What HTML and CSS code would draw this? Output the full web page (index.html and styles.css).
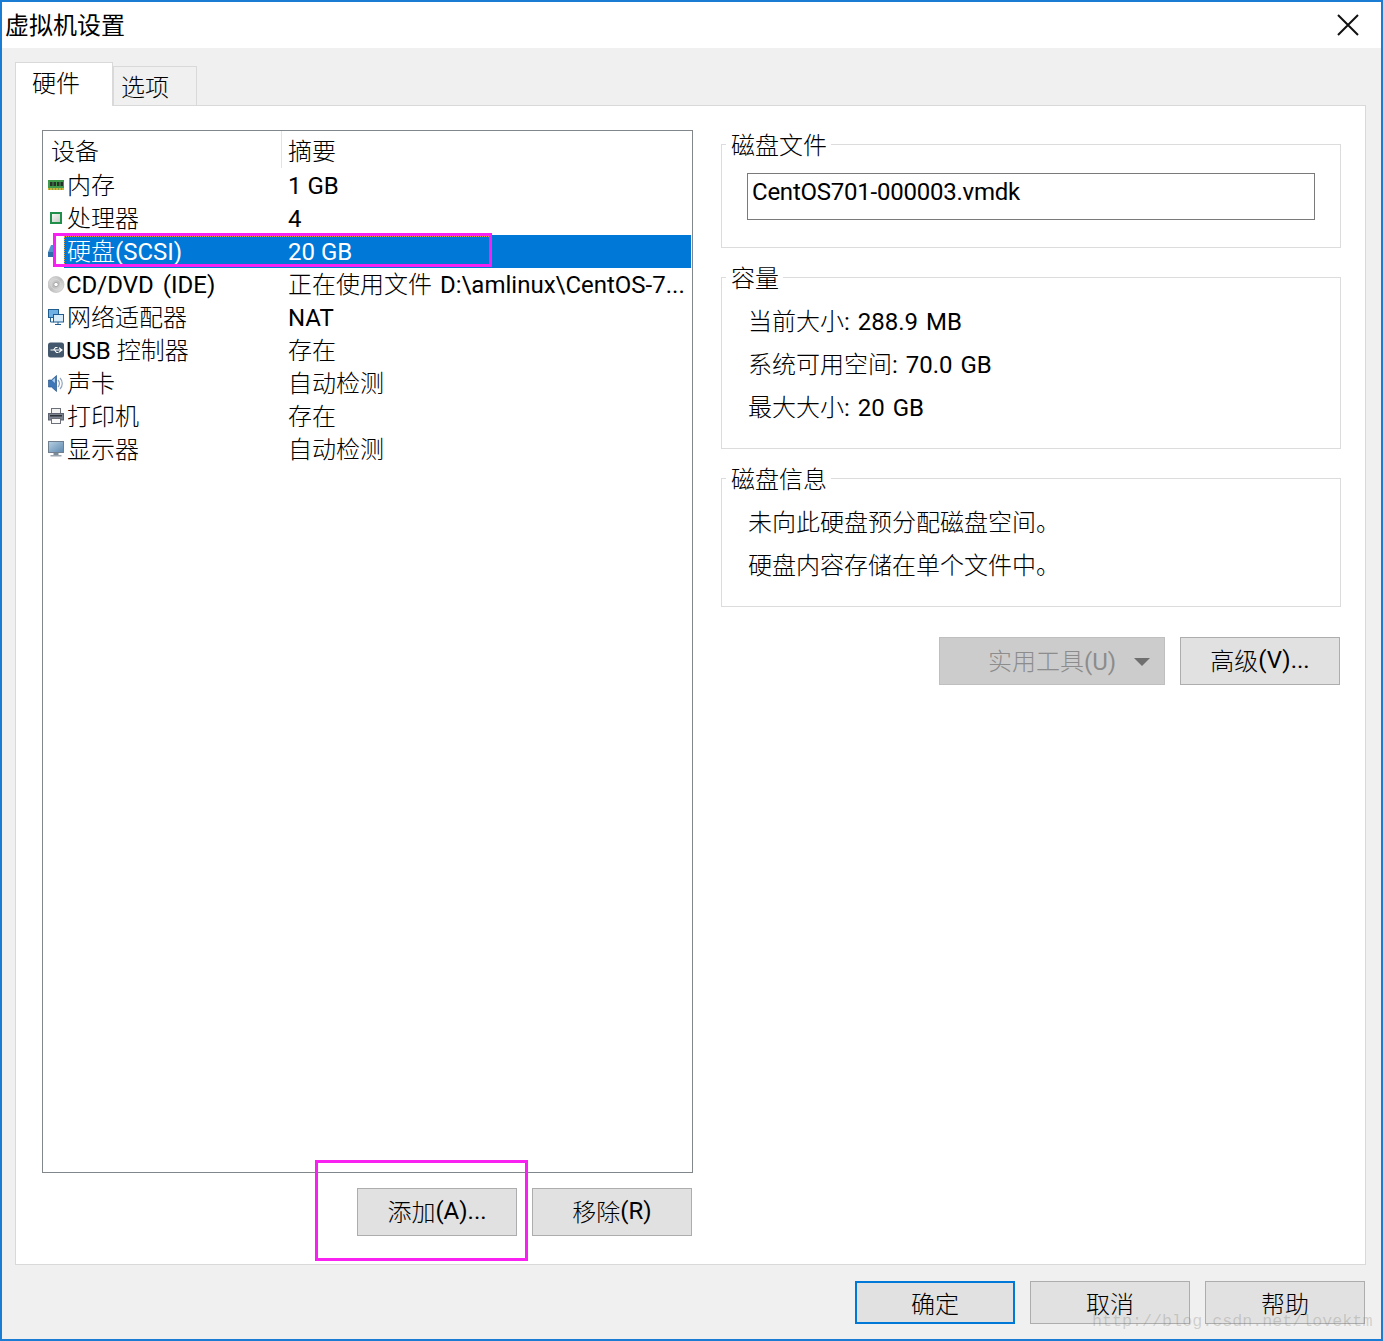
FILE: index.html
```html
<!DOCTYPE html>
<html lang="zh-CN">
<head>
<meta charset="utf-8">
<title>虚拟机设置</title>
<link rel="stylesheet" href="styles.css">
</head>
<body>
<div class="window">
  <header class="titlebar">
    <span class="title">虚拟机设置</span>
    <svg class="close" width="22" height="22" viewBox="0 0 22 22"><path d="M1 1 L21 21 M21 1 L1 21" stroke="#111" stroke-width="2" fill="none"/></svg>
  </header>
  <div class="tabs">
    <div class="tab tab-active">硬件</div>
    <div class="tab">选项</div>
  </div>
  <main class="panel">
    <section class="left">
      <div class="list">
        <div class="row head"><span class="c1">设备</span><span class="c2">摘要</span></div>
        <div class="row"><span class="ico"><svg width="17" height="17" viewBox="0 0 17 17"><rect x="0" y="3" width="16" height="8" fill="#3f9a4c"/><rect x="0" y="11" width="16" height="2" fill="#c9b53c"/><path d="M2 5h2.500v4H2zM5.500 5H8v4H5.500zM9 5h2.500v4H9zM12.500 5H15v4h-2.500z" fill="#2b2f2b"/><path d="M1 12h1M4 12h1M7 12h1M10 12h1M13 12h1" stroke="#4a8a3f"/></svg></span><span class="c1 t">内存</span><span class="c2 lat">1 GB</span></div>
        <div class="row"><span class="ico"><svg width="17" height="17" viewBox="0 0 17 17"><defs><linearGradient id="cpu" x1="0" y1="0" x2="1" y2="1"><stop offset="0" stop-color="#f6f6f2"/><stop offset="1" stop-color="#c9ccc6"/></linearGradient></defs><rect x="2" y="2" width="12" height="12" fill="#1f8f4a"/><rect x="4" y="4" width="8" height="8" fill="url(#cpu)"/></svg></span><span class="c1 t">处理器</span><span class="c2 lat">4</span></div>
        <div class="row sel"><span class="ico"><svg width="17" height="17" viewBox="0 0 17 17"><path d="M3 2h10l3 7v5H0V9z" fill="#4f96d0"/><rect x="0" y="9" width="16" height="5" fill="#2e6ea8"/><rect x="13" y="11" width="2" height="1" fill="#cde"/></svg></span><span class="c1 t">硬盘<span class="lat">(SCSI)</span></span><span class="c2 lat">20 GB</span></div>
        <div class="row"><span class="ico"><svg width="17" height="17" viewBox="0 0 17 17"><defs><linearGradient id="cd" x1="0" y1="0" x2="1" y2="1"><stop offset="0" stop-color="#e6e6e6"/><stop offset=".5" stop-color="#bdbdbd"/><stop offset="1" stop-color="#eeeeee"/></linearGradient></defs><circle cx="8" cy="8.500" r="8" fill="url(#cd)" stroke="#b4b4b4" stroke-width=".6"/><circle cx="8" cy="8.500" r="5" fill="none" stroke="#d8d8d8"/><circle cx="8" cy="8.500" r="2.200" fill="#fff" stroke="#999" stroke-width=".8"/></svg></span><span class="c1 t-tight lat cd">CD/DVD (IDE)</span><span class="c2 clip">正在使用文件<span class="lat wide"> D:\amlinux\CentOS-7...</span></span></div>
        <div class="row"><span class="ico"><svg width="17" height="17" viewBox="0 0 17 17"><rect x="0.500" y="0.500" width="10" height="8" fill="#6fb0e4" stroke="#1f5c90"/><rect x="5.500" y="5.500" width="10" height="7.500" fill="#d6ecfb" stroke="#1f5c90"/><path d="M7 15.500h6M10 13v2.500M2.500 8.500v4.500h3" stroke="#1f5c90" fill="none"/></svg></span><span class="c1 t">网络适配器</span><span class="c2 lat">NAT</span></div>
        <div class="row"><span class="ico"><svg width="17" height="17" viewBox="0 0 17 17"><rect x="0" y="0.500" width="16" height="15" rx="2.500" fill="#43586c"/><path d="M2.500 8h11M11 5.800l3 2.200-3 2.200M5.500 8l2-2.500h2M6.500 8l2 2.500h2" stroke="#fff" stroke-width="1.100" fill="none"/></svg></span><span class="c1 t-tight"><span class="lat">USB </span>控制器</span><span class="c2">存在</span></div>
        <div class="row"><span class="ico"><svg width="17" height="17" viewBox="0 0 17 17"><path d="M0.500 5h3l5-4.500v16l-5-4.500h-3z" fill="#3f78b8" stroke="#2a5688" stroke-width=".7"/><path d="M4 5.500l3-2.500v5z" fill="#a9cdee"/><path d="M10 5c1.700 2 1.700 5 0 7M12 3c3 3 3 8 0 11" stroke="#8fa6bd" stroke-width="1.200" fill="none"/></svg></span><span class="c1 t">声卡</span><span class="c2">自动检测</span></div>
        <div class="row"><span class="ico"><svg width="17" height="17" viewBox="0 0 17 17"><rect x="3.500" y="0.500" width="9" height="6" fill="#f2f2f2" stroke="#6a6f78"/><rect x="0.500" y="5.500" width="15" height="6.500" fill="#7d8490" stroke="#5c6270"/><rect x="2" y="7" width="12" height="1.500" fill="#2d3138"/><rect x="3.500" y="10.500" width="9" height="5" fill="#fafafa" stroke="#6a6f78"/></svg></span><span class="c1 t">打印机</span><span class="c2">存在</span></div>
        <div class="row"><span class="ico"><svg width="17" height="17" viewBox="0 0 17 17"><defs><linearGradient id="scr" x1="0" y1="0" x2="1" y2="1"><stop offset="0" stop-color="#b7d0e4"/><stop offset="1" stop-color="#5d88ae"/></linearGradient></defs><rect x="0.500" y="0.500" width="15" height="11" fill="url(#scr)" stroke="#70808f"/><rect x="5.500" y="12" width="5" height="2" fill="#7b8a96"/><rect x="2.500" y="14" width="11" height="1.500" fill="#98a4ae"/></svg></span><span class="c1 t">显示器</span><span class="c2">自动检测</span></div>
      </div>
      <div class="list-actions">
        <button class="btn">添加<span class="lat">(A)...</span></button>
        <button class="btn">移除<span class="lat">(R)</span></button>
      </div>
    </section>
    <section class="right">
      <fieldset class="group g1">
        <legend>磁盘文件</legend>
        <div class="field lat">CentOS701-000003.vmdk</div>
      </fieldset>
      <fieldset class="group g2">
        <legend>容量</legend>
        <p class="line">当前大小<span class="lat wide">: 288.9 MB</span></p>
        <p class="line">系统可用空间<span class="lat wide">: 70.0 GB</span></p>
        <p class="line">最大大小<span class="lat wide">: 20 GB</span></p>
      </fieldset>
      <fieldset class="group g3">
        <legend>磁盘信息</legend>
        <p class="line">未向此硬盘预分配磁盘空间。</p>
        <p class="line">硬盘内容存储在单个文件中。</p>
      </fieldset>
      <div class="disk-actions">
        <button class="btn btn-disabled"><span>实用工具<span class="lat">(U)</span></span><i class="caret"></i></button>
        <button class="btn">高级<span class="lat">(V)...</span></button>
      </div>
    </section>
  </main>
  <footer class="footer">
    <button class="btn btn-small btn-default">确定</button>
    <button class="btn btn-small">取消</button>
    <button class="btn btn-small">帮助</button>
  </footer>
  <div class="mark mark-row"></div>
  <div class="mark mark-add"></div>
  <div class="watermark">http://blog.csdn.net/lovektm</div>
</div>
</body>
</html>
```
FILE: styles.css
```css
* { box-sizing: border-box; }
html, body { margin: 0; padding: 0; }
body {
  width: 1383px; height: 1341px; overflow: hidden; background: #fff;
  font-family: "Roboto", "Noto Sans CJK SC", sans-serif;
  font-size: 24px; color: #000; font-weight: 300;
}
.lat { font-weight: 400; }
.wide { word-spacing: 2px; }
.cd { word-spacing: 3px; }
.window {
  position: relative; width: 1383px; height: 1341px;
  border: 2px solid #1b7cd3; background: #f0f0f0;
  display: flex; flex-direction: column;
}
.titlebar {
  height: 46px; background: #fff; flex: none;
  display: flex; align-items: center; justify-content: space-between;
  padding: 0 22px 0 3px;
}
.title { line-height: 46px; padding-top: 2px; font-weight: 400; }
.tabs { height: 57px; flex: none; display: flex; align-items: flex-end; padding-left: 13px; }
.tab {
  width: 84px; height: 39px; background: #f0f0f0;
  border: 1px solid #d9d9d9; border-bottom: 0;
  padding-left: 7px; line-height: 43px;
}
.tab-active {
  width: 98px; height: 44px; background: #fff; line-height: 43px; padding-left: 16px;
  position: relative; z-index: 1; margin-bottom: -1px;
}
.panel {
  height: 1160px; flex: none; margin: 0 15px 0 13px;
  background: #fff; border: 1px solid #d9d9d9;
  display: flex; padding: 24px 24px 0 26px; gap: 28px;
}
.left { width: 651px; flex: none; display: flex; flex-direction: column; }
.list { height: 1043px; border: 1px solid #82878c; flex: none; padding-top: 2px; }
.row { height: 33px; display: flex; align-items: center; line-height: 33px; padding-left: 5px; white-space: nowrap; }
.head { height: 36px; position: relative; align-items: flex-start; padding-left: 4px; }
.head::after { content: ""; position: absolute; left: 238px; top: -2px; height: 37px; border-left: 1px solid #e3e3e3; }
.head .c1 { width: 241px; padding-left: 4px; }
.ico { width: 17px; height: 17px; flex: none; display: block; }
.ico svg { display: block; }
.c1, .c2 { padding-top: 2px; }
.head .c1, .head .c2 { padding-top: 3px; }
.c1 { width: 223px; flex: none; }
.t { padding-left: 2px; }
.t-tight { padding-left: 1px; }
.c2 { flex: 1; min-width: 0; }
.clip { overflow: hidden; }
.sel { background: linear-gradient(to right, #fff 21px, #0078d7 21px); color: #fff; margin-right: 1px; }
.list-actions { display: flex; justify-content: flex-end; gap: 15px; margin-top: 15px; padding-right: 1px; }
.btn {
  width: 160px; height: 48px; background: #e1e1e1; border: 1px solid #adadad;
  font: inherit; color: #000; padding: 0 0 3px; display: inline-flex; align-items: center; justify-content: center;
}
.right { width: 620px; flex: none; margin-top: -1px; }
.group {
  margin: 0 0 14px; padding: 0 25px; width: 620px;
  border: 1px solid #dcdcdc; min-width: 0;
}
.group legend { margin-left: -21px; padding: 0 4px 0 5px; line-height: 34px; height: 30px; font-size: 24px; }
.g1 { height: 119px; }
.g2 { height: 187px; }
.g3 { height: 144px; }
.field { height: 47px; width: 568px; border: 1px solid #7a7a7a; margin-top: 14px; padding-left: 4px; line-height: 36px; white-space: nowrap; letter-spacing: -.24px; }
.line { margin: 0; height: 43px; line-height: 43px; white-space: nowrap; padding-left: 1px; }
.g2 .line:first-of-type { margin-top: 9px; }
.g3 .line:first-of-type { margin-top: 9px; }
.disk-actions { display: flex; justify-content: flex-end; gap: 15px; margin-top: 30px; padding-right: 1px; }
.btn-disabled { width: 226px; background: #cccccc; border-color: #bfbfbf; color: #8c8c8c; padding-left: 48px; justify-content: flex-start; }
.caret { width: 0; height: 0; margin: 5px 0 0 18px; border-left: 8px solid transparent; border-right: 8px solid transparent; border-top: 8px solid #6f6f6f; }
.footer { flex: 1; display: flex; justify-content: flex-end; gap: 15px; padding: 16px 16px 0 0; align-items: flex-start; }
.btn-small { height: 43px; padding-bottom: 1px; }
.btn-default { border: 2px solid #0078d7; }
.mark { position: absolute; border: 3px solid #f921f2; pointer-events: none; }
.mark-row { left: 51px; top: 231px; width: 439px; height: 34px; background: linear-gradient(to right, #fff 8px, transparent 8px); }
.mark-row::before { content: ""; position: absolute; left: 8px; top: 0; right: 0; bottom: 0; border-left: 1px dotted #e8a33d; border-top: 1px dotted #e8a33d; }
.mark-add { left: 313px; top: 1158px; width: 213px; height: 101px; }
.watermark {
  position: absolute; left: 1090px; top: 1310px; color: rgba(120,120,110,.28);
  font-family: "Liberation Mono", monospace; font-size: 16.700px; white-space: nowrap; line-height: 20px;
}
```
